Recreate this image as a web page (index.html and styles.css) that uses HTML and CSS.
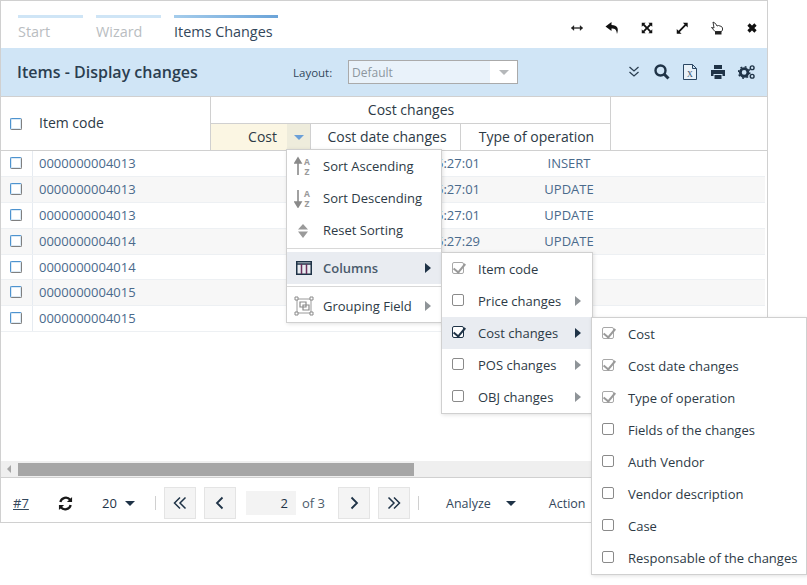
FILE: index.html
```html
<!DOCTYPE html>
<html lang="en">
<head>
	<meta charset="UTF-8">
	<title>Items - Display changes</title>
	<link rel="stylesheet" href="styles.css">
</head>
<body>
	<div class="window">
		<div class="topbar">
			<ul class="steps">
				<li class="step step1">Start</li>
				<li class="step step2">Wizard</li>
				<li class="step step3 active">Items Changes</li>
			</ul>
			<div class="topicons">
				<svg viewBox="0 0 14 14"><path d="M1 7l3-2.500v2h6v-2L13 7l-3 2.500v-2H4v2z" fill="#222" stroke="#222" stroke-width=".3"/></svg>
				<svg viewBox="0 0 14 14"><path d="M6.500 1L.5 5.500l6 4.500V7.500c3.500 0 5 1 5.500 5.500 2-5.500.5-9-5.500-9z" fill="#111"/></svg>
				<svg viewBox="-1 -1 16 16"><path d="M1 1h4.500L4 2.500 7 5.500l3-3L8.500 1H13v4.500L11.500 4l-3 3 3 3L13 8.500V13H8.500l1.500-1.500-3-3-3 3L5.500 13H1V8.500L2.500 10l3-3-3-3L1 5.500z" fill="#111"/></svg>
				<svg viewBox="-1 -1 16 16"><path d="M8 1h5.500v5.500l-2-2-7 7 2 2H1V8l2 2 7-7z" fill="#111"/></svg>
				<svg viewBox="0 0 14 14"><path d="M3 1l2.500 1.500L7 5l1.500-.5 1.500.5 1.500.5 1 1.500v2l-1 1.500H5L1.500 6.500 4 7z" fill="#fff" stroke="#222" stroke-width=".9"/><path d="M5 10.500h6.500V13.500H5z" fill="#222"/></svg>
				<svg viewBox="0 0 14 14"><path d="M3.500 3.500l7 7M10.500 3.500l-7 7" stroke="#111" stroke-width="3.200"/></svg>
			</div>
		</div>

		<div class="titlebar">
			<h1>Items - Display changes</h1>
			<span class="layoutlabel">Layout:</span>
			<div class="layoutselect">
				<span class="selectvalue">Default</span>
				<span class="selectarrow"><i class="caret grey"></i></span>
			</div>
			<div class="titleicons">
				<svg class="ic-chev" viewBox="0 0 12 12"><path d="M1.500 1l4.500 4 4.500-4M1.500 6l4.500 4 4.500-4" fill="none" stroke="#2b3e50" stroke-width="1.300"/></svg>
				<svg class="ic-search" viewBox="0 0 16 16"><circle cx="6.500" cy="6.500" r="5" fill="none" stroke="#1f3347" stroke-width="2.400"/><path d="M10 10l4.500 4.500" stroke="#1f3347" stroke-width="3"/></svg>
				<svg class="ic-xls" viewBox="0 0 14 16"><path d="M.5.500h9l4 4v11H.5zM9.500.500v4h4" fill="#e8f1f8" stroke="#2b4763"/><text x="7" y="13" text-anchor="middle" class="xlsletter">X</text></svg>
				<svg class="ic-print" viewBox="0 0 16 16"><path d="M4 1h8v4H4zM1 6h14v6h-2.500v-2h-9v2H1zM4.500 11h7v4h-7z" fill="#1f3347"/></svg>
				<svg class="ic-gears" viewBox="0 0 18 16"><circle cx="6.500" cy="8.500" r="4" fill="none" stroke="#1f3347" stroke-width="3"/><circle cx="6.500" cy="8.500" r="6" fill="none" stroke="#1f3347" stroke-width="1.600" stroke-dasharray="2 2.700"/><circle cx="15" cy="3.500" r="2" fill="none" stroke="#1f3347" stroke-width="1.500"/><circle cx="15" cy="12.500" r="2" fill="none" stroke="#1f3347" stroke-width="1.500"/></svg>
			</div>
		</div>

		<div class="gridhead">
			<div class="headcheck"><i class="check blue"></i></div>
			<div class="headcode">Item code</div>
			<div class="headgroup">
				<div class="grouptitle">Cost changes</div>
				<div class="groupcols">
					<div class="col col-cost">Cost</div>
					<div class="col col-arrow"><i class="caret blue"></i></div>
					<div class="col col-date">Cost date changes</div>
					<div class="col col-type">Type of operation</div>
				</div>
			</div>
		</div>

		<div class="gridbody">
			<div class="row"><div class="cellcheck"><i class="check blue"></i></div><div class="cellcode">0000000004013</div><div class="celldate">5:27:01</div><div class="cellop">INSERT</div></div>
			<div class="row odd"><div class="cellcheck"><i class="check blue"></i></div><div class="cellcode">0000000004013</div><div class="celldate">5:27:01</div><div class="cellop">UPDATE</div></div>
			<div class="row"><div class="cellcheck"><i class="check blue"></i></div><div class="cellcode">0000000004013</div><div class="celldate">5:27:01</div><div class="cellop">UPDATE</div></div>
			<div class="row odd"><div class="cellcheck"><i class="check blue"></i></div><div class="cellcode">0000000004014</div><div class="celldate">5:27:29</div><div class="cellop">UPDATE</div></div>
			<div class="row short"><div class="cellcheck"><i class="check blue"></i></div><div class="cellcode">0000000004014</div></div>
			<div class="row odd"><div class="cellcheck"><i class="check blue"></i></div><div class="cellcode">0000000004015</div></div>
			<div class="row"><div class="cellcheck"><i class="check blue"></i></div><div class="cellcode">0000000004015</div></div>
		</div>

		<div class="scrollbar">
			<span class="scrollleft"></span>
			<span class="scrollthumb"></span>
		</div>

		<div class="pager">
			<a class="recno" href="#">#7</a>
			<svg class="refresh" viewBox="0 0 16 16"><path d="M2.500 6.500A6 6 0 0 1 13 4M13.500 9.500A6 6 0 0 1 3 12" fill="none" stroke="#1a1a1a" stroke-width="2.400"/><path d="M15 1v5.500H9.500zM1 15V9.500h5.500z" fill="#1a1a1a"/></svg>
			<span class="pagesize">20</span>
			<i class="caret dark sizecaret"></i>
			<span class="vsep sep1"></span>
			<span class="pagebtn"><svg viewBox="0 0 14 14"><path d="M7 1.500L1.500 7 7 12.500M12.500 1.500L7 7l5.500 5.500" fill="none" stroke="#1f3347" stroke-width="1.500"/></svg></span>
			<span class="pagebtn"><svg viewBox="0 0 14 14"><path d="M9.500 1.500L4 7l5.500 5.500" fill="none" stroke="#1f3347" stroke-width="1.800"/></svg></span>
			<span class="pageinput">2</span>
			<span class="pageof">of 3</span>
			<span class="pagebtn"><svg viewBox="0 0 14 14"><path d="M4.500 1.500L10 7l-5.500 5.500" fill="none" stroke="#1f3347" stroke-width="1.800"/></svg></span>
			<span class="pagebtn"><svg viewBox="0 0 14 14"><path d="M1.500 1.500L7 7l-5.500 5.500M7 1.500L12.500 7 7 12.500" fill="none" stroke="#1f3347" stroke-width="1.500"/></svg></span>
			<span class="vsep sep2"></span>
			<span class="pagemenu">Analyze</span>
			<i class="caret dark analyzecaret"></i>
			<span class="pagemenu actionmenu">Action</span>
		</div>
	</div>

	<!-- sort menu -->
	<div class="menu menu1">
		<div class="item"><span class="mi">
			<svg viewBox="0 0 20 20"><path d="M4 19V6M1 7l3-5 3 5z" stroke="#8a8a8a" stroke-width="1.600" fill="#8a8a8a"/><text x="13" y="9" class="az">A</text><text x="13" y="19" class="az">Z</text></svg>
		</span>Sort Ascending</div>
		<div class="item"><span class="mi">
			<svg viewBox="0 0 20 20"><path d="M4 2v13M1 14l3 5 3-5z" stroke="#8a8a8a" stroke-width="1.600" fill="#8a8a8a"/><text x="13" y="9" class="az">A</text><text x="13" y="19" class="az">Z</text></svg>
		</span>Sort Descending</div>
		<div class="item"><span class="mi">
			<svg viewBox="0 0 20 20"><path d="M9 4l5 5.500H4zM9 18l-5-6.500h10z" fill="#9a9a9a"/></svg>
		</span>Reset Sorting</div>
		<div class="menusep"></div>
		<div class="item hl"><span class="mi">
			<svg viewBox="0 0 16 14"><path d="M.75.750h14.500v12.500H.75z" fill="none" stroke="#1f3347" stroke-width="1.500"/><path d="M1 3h14" stroke="#1f3347" stroke-width="1.500"/><path d="M5.500 3v10M10.500 3v10" stroke="#6b2f5b" stroke-width="1.500"/></svg>
		</span><span class="semi">Columns</span><i class="arrow dark"></i></div>
		<div class="menusep"></div>
		<div class="item"><span class="mi">
			<svg viewBox="0 0 20 20"><path d="M3 3h14v14H3z" fill="none" stroke="#9a9a9a"/><path d="M6 6h6v5H6z M9 9h6v5H9z" fill="#fff" stroke="#8a8a8a" stroke-width="1.200"/><path d="M1 1h3v3H1zM16 1h3v3h-3zM1 16h3v3H1zM16 16h3v3h-3z" fill="#fff" stroke="#8a8a8a"/></svg>
		</span>Grouping Field<i class="arrow"></i></div>
	</div>

	<!-- columns menu -->
	<div class="menu menu2">
		<div class="item"><i class="check on grey"></i>Item code</div>
		<div class="item"><i class="check"></i>Price changes<i class="arrow"></i></div>
		<div class="item hl"><i class="check on dark"></i>Cost changes<i class="arrow dark"></i></div>
		<div class="item"><i class="check"></i>POS changes<i class="arrow"></i></div>
		<div class="item"><i class="check"></i>OBJ changes<i class="arrow"></i></div>
	</div>

	<!-- cost changes menu -->
	<div class="menu menu3">
		<div class="item"><i class="check on grey"></i>Cost</div>
		<div class="item"><i class="check on grey"></i>Cost date changes</div>
		<div class="item"><i class="check on grey"></i>Type of operation</div>
		<div class="item"><i class="check"></i>Fields of the changes</div>
		<div class="item"><i class="check"></i>Auth Vendor</div>
		<div class="item"><i class="check"></i>Vendor description</div>
		<div class="item"><i class="check"></i>Case</div>
		<div class="item"><i class="check"></i>Responsable of the changes</div>
	</div>
</body>
</html>
```

FILE: styles.css
```css
* {
	margin: 0;
	padding: 0;
	box-sizing: border-box;
}
body {
	background: #fff;
	font-family: "Open Sans", "Liberation Sans", sans-serif;
	font-size: 13px;
	color: #1f3347;
	height: 585px;
	overflow: hidden;
	position: relative;
}
ul li {
	list-style: none;
}
svg {
	display: block;
}

.window {
	width: 768px;
	height: 523px;
	border: 1px solid #d0d0d0;
	display: flex;
	flex-direction: column;
}

/* top */
.topbar {
	height: 47px;
	flex: none;
	display: flex;
	justify-content: space-between;
	padding: 14px 0 0 17px;
}
.steps {
	display: flex;
	gap: 13px;
}
.step {
	height: 33px;
	border-top: 3px solid #cfe5f6;
	font-size: 14.400px;
	line-height: 27px;
	color: #b9bdc1;
	white-space: nowrap;
}
.step1, .step2 {
	width: 65px;
}
.step3 {
	width: 104px;
	color: #33475b;
	border-image: linear-gradient(to right, #a5cdec, #6aa3d8) 1;
}
.topicons {
	display: flex;
	gap: 21px;
	padding: 6px 8px 0 0;
}
.topicons svg {
	width: 14px;
	height: 14px;
}

.titlebar {
	height: 49px;
	flex: none;
	background: #d0e5f6;
	border-bottom: 1px solid #d0d0d0;
	display: flex;
	align-items: center;
	padding-left: 16px;
}
.titlebar h1 {
	width: 276px;
	font-size: 16px;
	font-weight: 600;
	color: #2b3e50;
	white-space: nowrap;
}
.layoutlabel {
	width: 55px;
	font-size: 11.500px;
	color: #33475b;
}
.layoutselect {
	width: 170px;
	height: 24px;
	border: 1px solid #aaa;
	background: #e9f2fa;
	display: flex;
	justify-content: space-between;
}
.selectvalue {
	padding-left: 3px;
	font-size: 12px;
	line-height: 23px;
	color: #8d979f;
}
.selectarrow {
	width: 27px;
	background: #fff;
	display: flex;
	align-items: center;
	justify-content: center;
}
.titleicons {
	display: flex;
	align-items: center;
	margin-left: 110px;
}
.ic-chev {
	width: 12px;
	height: 12px;
}
.ic-search {
	width: 16px;
	height: 16px;
	margin-left: 14px;
}
.ic-xls {
	width: 14px;
	height: 16px;
	margin-left: 13px;
}
.xlsletter {
	font-family: "Liberation Serif", serif;
	font-size: 8px;
	fill: #2b4763;
}
.ic-print {
	width: 16px;
	height: 16px;
	margin-left: 13px;
}
.ic-gears {
	width: 17px;
	height: 16px;
	margin-left: 12px;
}

/* grid header */
.gridhead {
	height: 54px;
	flex: none;
	display: flex;
	border-bottom: 1px solid #d0d0d0;
	font-size: 14px;
	color: #2d3a46;
}
.headcheck {
	width: 32px;
	display: flex;
	align-items: center;
	padding-left: 9px;
}
.headcode {
	width: 178px;
	padding-left: 6px;
	line-height: 52px;
	border-right: 1px solid #d0d0d0;
}
.headgroup {
	width: 400px;
	border-right: 1px solid #d0d0d0;
}
.grouptitle {
	height: 27px;
	line-height: 26px;
	text-align: center;
	padding-left: 1px;
	border-bottom: 1px solid #d0d0d0;
}
.groupcols {
	display: flex;
	height: 26px;
	line-height: 25px;
}
.col {
	text-align: center;
	border-right: 1px solid #d0d0d0;
}
.col-cost {
	width: 76px;
	background: #fbf6e3;
	text-align: right;
	padding-right: 10px;
	border-right: 0;
}
.col-arrow {
	width: 24px;
	background: #eeecdc;
	display: flex;
	align-items: center;
	justify-content: center;
}
.col-date {
	width: 150px;
	padding-left: 3px;
}
.col-type {
	width: 149px;
	padding-left: 2px;
	border-right: 0;
}

/* rows */
.gridbody {
	flex: 1;
}
.row {
	height: 26px;
	width: 764px;
	display: flex;
	align-items: center;
	border-bottom: 1px solid #edf0f3;
	font-size: 13px;
	line-height: 25px;
	color: #4a6a8c;
}
.row.short {
	height: 25px;
}
.row.odd {
	background: #f7f7f7;
}
.cellcheck {
	width: 32px;
	height: 100%;
	padding: 6px 0 0 9px;
	border-right: 1px solid #e6ebf1;
}
.cellcode {
	width: 250px;
	padding-left: 6px;
}
.celldate {
	width: 197px;
	text-align: right;
}
.cellop {
	width: 178px;
	text-align: center;
}

.scrollbar {
	height: 17px;
	flex: none;
	background: #efefef;
	border-bottom: 1px solid #d0d0d0;
	display: flex;
	align-items: center;
	padding-left: 6px;
	gap: 7px;
}
.scrollleft {
	width: 0;
	height: 0;
	border: 4px solid transparent;
	border-right: 4px solid #a6a6a6;
	border-left: 0;
}
.scrollthumb {
	width: 396px;
	height: 13px;
	background: #a6a6a6;
}

/* pager */
.pager {
	height: 44px;
	flex: none;
	display: flex;
	align-items: center;
	padding: 6px 0 0 12px;
	position: relative;
}
.recno {
	width: 45px;
	font-size: 13px;
	color: #33475b;
}
.refresh {
	width: 15px;
	height: 15px;
}
.pagesize {
	margin-left: 29px;
	width: 23px;
	font-size: 13px;
	color: #1f3347;
}
.sizecaret {
	margin-right: 20px;
}
.vsep {
	width: 1px;
	height: 14px;
	background: #d0d0d0;
}
.sep1 {
	margin-right: 8px;
}
.sep2 {
	margin-right: 27px;
}
.pagebtn {
	width: 32px;
	height: 32px;
	background: #f4f4f4;
	border: 1px solid #e4e4e4;
	margin-right: 8px;
	display: flex;
	align-items: center;
	justify-content: center;
}
.pagebtn svg {
	width: 14px;
	height: 14px;
}
.pageinput {
	width: 50px;
	height: 24px;
	margin-left: 2px;
	background: #f3f3f3;
	text-align: right;
	padding-right: 8px;
	line-height: 24px;
	font-size: 13px;
}
.pageof {
	width: 42px;
	padding-left: 6px;
	color: #4d5d6c;
}
.pagemenu {
	font-size: 12.500px;
	color: #33475b;
}
.analyzecaret {
	margin-left: 15px;
}
.actionmenu {
	margin-left: 33px;
}

/* carets, checks */
.caret {
	display: block;
	width: 0;
	height: 0;
	border-left: 5px solid transparent;
	border-right: 5px solid transparent;
	border-top: 5px solid #1f3347;
}
.caret.blue {
	border-top-color: #6a9fd8;
}
.caret.grey {
	border-top-color: #b5b8ba;
}
.check {
	display: block;
	position: relative;
	width: 12px;
	height: 12px;
	border: 1px solid #8a8a8a;
	border-radius: 2px;
	background: #fff;
	flex: none;
}
.check.blue {
	border-color: #7f7f7f;
	box-shadow: inset 0 0 0 1px #dbeaf6;
	border-left-color: #4d93cf;
	border-top-color: #4d93cf;
}
.check.on::after {
	content: "";
	position: absolute;
	left: 3px;
	top: -2px;
	width: 5px;
	height: 10px;
	border: solid #9a9a9a;
	border-width: 0 2.500px 2.500px 0;
	transform: rotate(40deg);
}
.check.on.dark {
	border-color: #1f3347;
}
.check.on.dark::after {
	border-color: #1f3347;
}
.check.on.grey {
	border-color: #a8a8a8;
}

/* menus */
.menu {
	position: absolute;
	background: #fff;
	border: 1px solid #d0d0d0;
	box-shadow: 1px 1px 4px rgba(0, 0, 0, 0.12);
	font-size: 13px;
	color: #2d3a46;
}
.menu1 {
	left: 286px;
	top: 149px;
	width: 156px;
	height: 174px;
}
.menu2 {
	left: 441px;
	top: 252px;
	width: 152px;
	height: 162px;
}
.menu3 {
	left: 591px;
	top: 317px;
	width: 216px;
	height: 258px;
}
.item {
	height: 32px;
	display: flex;
	align-items: center;
	position: relative;
	white-space: nowrap;
}
.item.hl {
	background: #e9ecf1;
}
.menu1 .item {
	padding-left: 36px;
}
.menu2 .item, .menu3 .item {
	padding-left: 10px;
}
.menu2 .check, .menu3 .check {
	margin: -3px 14px 0 0;
}
.mi {
	position: absolute;
	left: 7px;
	top: 6px;
	width: 20px;
	height: 20px;
	display: flex;
	align-items: center;
	justify-content: center;
}
.mi svg {
	width: 20px;
	height: 20px;
}
.menu1 .hl .mi svg {
	width: 16px;
	height: 14px;
}
.az {
	font-size: 8.500px;
	font-weight: 700;
	fill: #9a9a9a;
	text-anchor: middle;
}
.semi {
	font-weight: 600;
	color: #4a5b6c;
}
.menusep {
	height: 4px;
	border-top: 1px solid #d8d8d8;
	margin-top: 2px;
}
.arrow {
	position: absolute;
	right: 10px;
	top: 11px;
	width: 0;
	height: 0;
	border-top: 5px solid transparent;
	border-bottom: 5px solid transparent;
	border-left: 6px solid #8f9498;
}
.menu2 .arrow {
	right: 11px;
}
.arrow.dark {
	border-left-color: #1f3347;
}
```
